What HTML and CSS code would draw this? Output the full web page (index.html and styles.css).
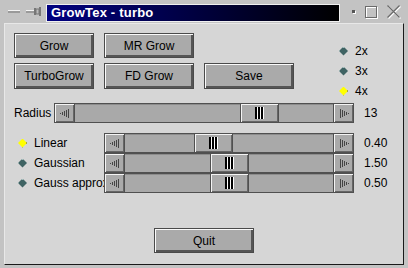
FILE: index.html
```html
<!DOCTYPE html>
<html lang="en">
<head>
    <meta charset="UTF-8">
    <title>GrowTex - turbo</title>
    <link rel="stylesheet" href="styles.css">
</head>

<body>
    <div class="window">
        <div class="titlebar">
            <span class="tb-menu"></span>
            <svg class="tb-pin" width="15" height="9" viewBox="0 0 15 9">
                <rect x="0" y="3" width="8" height="3" fill="#9a9a9a"/>
                <rect x="0" y="3" width="8" height="1" fill="#f4f4f4"/>
                <rect x="8" y="1" width="2" height="7" fill="#777"/>
                <rect x="10" y="2" width="3" height="5" fill="#bbb" stroke="#777" stroke-width="1"/>
                <rect x="13" y="0" width="2" height="9" fill="#777"/>
            </svg>
            <div class="title">GrowTex - turbo</div>
            <span class="tb-dot"></span>
            <span class="tb-max"></span>
            <svg class="tb-close" width="15" height="15" viewBox="0 0 15 15">
                <path d="M1.5 1.5 L13.5 13.5 M13.5 1.5 L1.5 13.5" stroke="#fff" stroke-width="1.2" transform="translate(1 1)"/>
                <path d="M1.5 1.5 L13.5 13.5 M13.5 1.5 L1.5 13.5" stroke="#6a6a6a" stroke-width="1.2"/>
            </svg>
        </div>

        <div class="client">
            <div class="top">
                <div class="actions">
                    <button class="btn">Grow</button>
                    <button class="btn">MR Grow</button>
                    <span></span>
                    <button class="btn">TurboGrow</button>
                    <button class="btn">FD Grow</button>
                    <button class="btn">Save</button>
                </div>
                <div class="scales">
                    <div class="radio"><span class="diamond"></span>2x</div>
                    <div class="radio"><span class="diamond"></span>3x</div>
                    <div class="radio"><span class="diamond on"></span>4x</div>
                </div>
            </div>

            <div class="row radius-row">
                <span class="label">Radius</span>
                <div class="slider wide">
                    <span class="arrow left"></span>
                    <div class="trough"><span class="thumb" style="margin-left:165px"></span></div>
                    <span class="arrow right"></span>
                </div>
                <span class="value">13</span>
            </div>

            <div class="filters">
                <div class="row">
                    <span class="label"><span class="diamond on"></span>Linear</span>
                    <div class="slider">
                        <span class="arrow left"></span>
                        <div class="trough"><span class="thumb" style="margin-left:69px"></span></div>
                        <span class="arrow right"></span>
                    </div>
                    <span class="value">0.40</span>
                </div>
                <div class="row">
                    <span class="label"><span class="diamond"></span>Gaussian</span>
                    <div class="slider">
                        <span class="arrow left"></span>
                        <div class="trough"><span class="thumb" style="margin-left:85px"></span></div>
                        <span class="arrow right"></span>
                    </div>
                    <span class="value">1.50</span>
                </div>
                <div class="row">
                    <span class="label"><span class="diamond"></span>Gauss approx</span>
                    <div class="slider">
                        <span class="arrow left"></span>
                        <div class="trough"><span class="thumb" style="margin-left:85px"></span></div>
                        <span class="arrow right"></span>
                    </div>
                    <span class="value">0.50</span>
                </div>
            </div>

            <div class="footer">
                <button class="btn quit">Quit</button>
            </div>
        </div>
    </div>
</body>
</html>
```

FILE: styles.css
```css
* {
    box-sizing: border-box;
}

body {
    margin: 0;
    padding: 0;
    background: #c3c3c3;
    font-family: "Liberation Sans", Arial, sans-serif;
    font-size: 12px;
    color: #000;
}

.window {
    width: 408px;
    height: 268px;
    background: #c3c3c3;
    overflow: hidden;
}

/* title bar */
.titlebar {
    height: 23px;
    display: flex;
    align-items: center;
    padding-left: 8px;
}

.tb-menu {
    width: 12px;
    height: 3px;
    background: #9a9a9a;
    border-top: 1px solid #f4f4f4;
}

.tb-pin {
    margin-left: 6px;
}

.title {
    margin-left: 5px;
    width: 294px;
    height: 18px;
    margin-top: 2px;
    padding-left: 4px;
    border: 1px solid #f0f0f0;
    background: linear-gradient(90deg, #000080, #000000);
    color: #fff;
    font-weight: bold;
    font-size: 13px;
    line-height: 16px;
    letter-spacing: 0.2px;
}

.tb-dot {
    width: 3px;
    height: 3px;
    margin-left: 12px;
    background: #555;
    box-shadow: 1px 1px 0 #fff;
}

.tb-max {
    width: 12px;
    height: 12px;
    margin-left: 10px;
    border: 1px solid #6a6a6a;
    box-shadow: 1px 1px 0 #fff, inset 1px 1px 0 #fff;
}

.tb-close {
    margin-left: 9px;
}

/* client area */
.client {
    margin-left: 4px;
    width: 400px;
    height: 242px;
    background: #d6d6d6;
    border-top: 1px solid #e8e8e8;
    border-left: 1px solid #e8e8e8;
    border-bottom: 1px solid #1a1a1a;
    border-right: 1px solid #1a1a1a;
    padding: 9px 0 0 9px;
}

.top {
    display: flex;
    height: 70px;
}

.actions {
    display: grid;
    grid-template-columns: 80px 90px 90px;
    grid-template-rows: 25px 26px;
    gap: 5px 10px;
}

.btn {
    font-family: inherit;
    font-size: 12px;
    color: #000;
    background: #aaaaaa;
    border: 1px solid #4a4a4a;
    box-shadow: inset 1px 1px 0 #fafafa, inset -2px -2px 0 #555;
    padding: 0;
    margin: 0;
}

.scales {
    margin-left: 45px;
    padding-top: 8px;
}

.radio {
    display: flex;
    align-items: center;
    height: 20px;
    gap: 7px;
}

.diamond {
    width: 9px;
    height: 9px;
    flex: none;
    background:
        linear-gradient(135deg, transparent 0 49%, transparent 49%),
        #3f6363;
    clip-path: polygon(50% 0, 100% 50%, 50% 100%, 0 50%);
    box-shadow: inset 1px 1px 0 #a8c0c0;
}

.diamond.on {
    background: #ffff00;
    box-shadow: inset -1px -1px 0 #6b6b00;
}

/* slider rows */
.row {
    display: flex;
    align-items: center;
    height: 20px;
}

.radius-row .label {
    width: 40px;
}

.label {
    width: 90px;
    display: flex;
    align-items: center;
    gap: 7px;
    padding-left: 4px;
    white-space: nowrap;
    overflow: hidden;
}

.radius-row .label {
    padding-left: 0;
}

.slider {
    display: flex;
    width: 250px;
    height: 20px;
    border: 1px solid #505050;
    background: #a9a9a9;
}

.slider.wide {
    width: 300px;
}

.arrow {
    width: 20px;
    height: 18px;
    flex: none;
    background-color: #aaaaaa;
    box-shadow: inset 1px 1px 0 #f4f4f4, inset -1px -1px 0 #666;
    background-repeat: no-repeat;
    background-position: center;
}

.arrow.left {
    border-right: 1px solid #505050;
    background-image: url("data:image/svg+xml,%3Csvg xmlns='http://www.w3.org/2000/svg' width='10' height='9'%3E%3Crect x='0' y='4' width='1' height='1' fill='%23444'/%3E%3Crect x='2' y='3' width='1' height='3' fill='%23444'/%3E%3Crect x='4' y='2' width='1' height='5' fill='%23444'/%3E%3Crect x='6' y='1' width='1' height='7' fill='%23444'/%3E%3Crect x='8' y='0' width='1' height='9' fill='%23444'/%3E%3C/svg%3E");
}

.arrow.right {
    border-left: 1px solid #505050;
    background-image: url("data:image/svg+xml,%3Csvg xmlns='http://www.w3.org/2000/svg' width='10' height='9'%3E%3Crect x='1' y='0' width='1' height='9' fill='%23444'/%3E%3Crect x='3' y='1' width='1' height='7' fill='%23444'/%3E%3Crect x='5' y='2' width='1' height='5' fill='%23444'/%3E%3Crect x='7' y='3' width='1' height='3' fill='%23444'/%3E%3Crect x='9' y='4' width='1' height='1' fill='%23444'/%3E%3C/svg%3E");
}

.trough {
    flex: 1;
    display: flex;
    box-shadow: inset 0 1px 0 #8c8c8c;
}

.thumb {
    width: 39px;
    height: 18px;
    display: flex;
    align-items: center;
    justify-content: center;
    background: #aaaaaa;
    border-left: 1px solid #505050;
    border-right: 1px solid #505050;
    box-shadow: inset 1px 1px 0 #f4f4f4, inset -1px -1px 0 #666;
}

.thumb::after {
    content: '';
    width: 9px;
    height: 12px;
    background: linear-gradient(90deg, #000 0 2px, #fff 2px 3px, #000 3px 5px, #fff 5px 6px, #000 6px 8px, #fff 8px 9px);
}

.value {
    margin-left: 10px;
}

.filters {
    margin-top: 10px;
}

.footer {
    display: flex;
    justify-content: center;
    padding-right: 9px;
    margin-top: 35px;
}

.quit {
    width: 100px;
    height: 25px;
}
```
